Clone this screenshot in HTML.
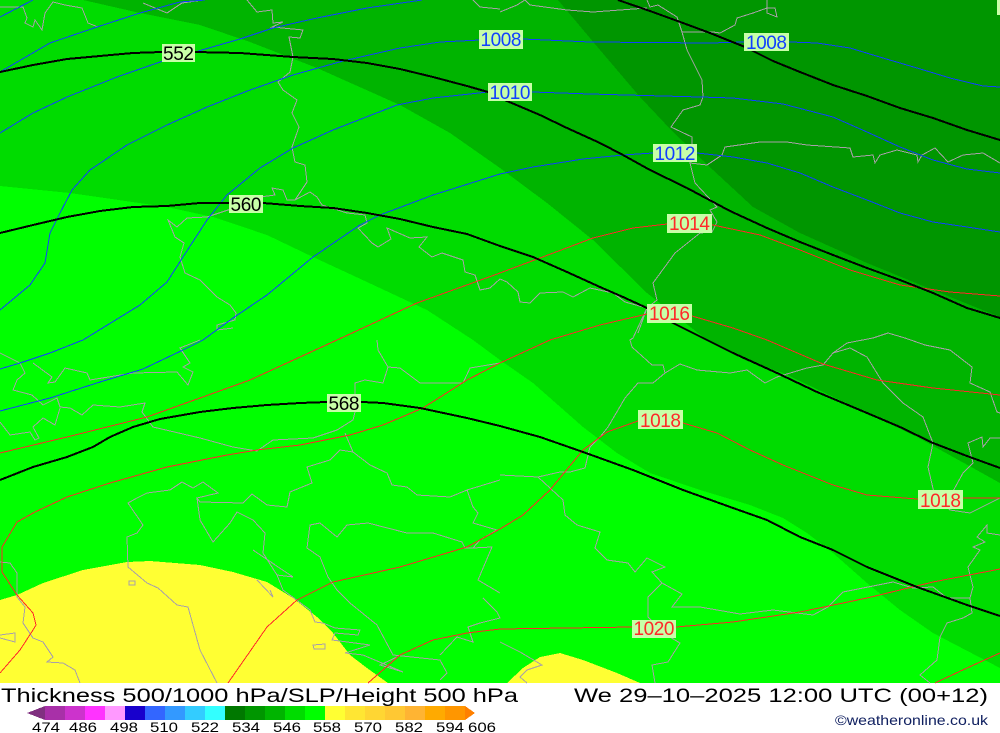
<!DOCTYPE html>
<html><head><meta charset="utf-8"><title>Thickness 500/1000 hPa</title>
<style>
html,body{margin:0;padding:0;background:#fff;width:1000px;height:733px;overflow:hidden}
svg{display:block;position:absolute;left:0;top:0}
.g{fill:none;stroke:#a8a0a8;stroke-width:1}
.b{fill:none;stroke:#1040ff;stroke-width:1}
.r{fill:none;stroke:#ff2828;stroke-width:1}
.k{fill:none;stroke:#000;stroke-width:2}
text{font-family:"Liberation Sans",sans-serif}
.l{font-size:19px;text-anchor:middle}
.t{font-size:19px;fill:#000}
.n{font-size:14px;fill:#000}
</style></head><body>
<svg width="1000" height="733" viewBox="0 0 1000 733" xmlns="http://www.w3.org/2000/svg">
<rect width="1000" height="733" fill="#fff"/>
<g shape-rendering="crispEdges">
<rect width="1000" height="683" fill="#00ff00"/>
<polygon fill="#00dc00" points="0,0 0,186 70,193 167,207 213,217 267,235 313,257 367,282 427,310 473,340 500,360 533,383 583,427 617,453 650,473 700,490 750,505 783,518 807,533 833,553 867,583 900,610 933,633 1000,668 1000,0"/>
<polygon fill="#00b400" points="83,0 140,13 200,25 250,42 317,68 400,105 450,133 500,168 547,203 593,240 647,293 707,340 745,360 783,373 867,413 917,437 1000,483 1000,0"/>
<polygon fill="#009600" points="558,0 600,50 640,97 673,132 713,170 753,207 800,233 867,263 933,290 1000,317 1000,0"/>
<polygon fill="#ffff33" points="0,600 17,595 43,583 83,570 127,562 150,561 200,565 233,572 267,582 293,598 317,617 333,633 350,655 367,668 388,683 0,683"/>
<polygon fill="#ffff33" points="507,683 523,668 540,657 560,653 583,660 617,673 640,683"/>
<rect x="997" y="0" width="3" height="15" fill="#c8ffa8"/>
</g>
<g shape-rendering="crispEdges">
<path class="g" d="M247,0 257,12 272,10 273,23 283,22 272,27 303,30 300,38 289,37 293,57 290,72 278,82 283,90 297,100 292,113 299,127 292,147 295,162 305,165 307,182 295,200 287,200 283,190 272,188 275,195 260,197 237,207 207,217 187,218 177,227 168,220 175,237 184,243 180,257 185,273 200,280 217,297 230,305 236,313 235,320 217,325 217,330 233,328"/>
<path class="g" d="M295,200 310,192 317,197 322,205 347,213 365,215 367,223 358,228 372,243 378,247 391,239 387,228 410,238 427,237 419,247 432,257 442,253 463,260 465,272 475,275 480,290 490,288 500,279 507,282 518,292 520,302 530,303 540,293 563,292 573,297 590,288 613,293 625,302 647,308 633,338 630,340 632,347 652,365 663,365 665,373 653,383 638,383 625,398 618,410 608,427 600,437 590,447 585,468 570,472 560,472 538,477 500,475"/>
<path class="g" d="M665,373 680,364 697,370 730,373 747,370 765,383 777,377 807,368 823,365 833,353 850,348 867,357 883,383 903,403 923,417 933,443 928,467 935,497 950,510 970,513 1000,498"/>
<path class="g" d="M833,353 847,343 873,338 888,333 905,338 925,345 950,350 972,367 970,383 990,392 997,412 1000,413"/>
<path class="g" d="M1000,438 990,438 983,447 982,437 968,443 973,463 963,473 952,493"/>
<path class="g" d="M647,0 650,7 658,5 677,17 682,32 687,50 702,80 703,97 700,105 683,110 671,127 692,137 692,150 690,163 695,183 708,197 717,207 710,210 717,222 712,232 700,233 675,253 653,283 657,300 647,308 638,333"/>
<path class="g" d="M682,32 713,32 720,33 735,25 737,18 753,13 767,8 775,8 777,17 767,13 767,0"/>
<path class="g" d="M500,12 517,5 525,0 530,5 567,10 593,12 647,8"/>
<path class="g" d="M690,163 707,165 722,155 725,147 760,142 787,142 807,145 850,148 853,157 873,155 875,163 880,155 897,150 917,155 918,162 922,155 935,148 948,162 963,155 983,153 1000,163"/>
<path class="g" d="M0,7 23,7 27,18 25,23 33,27 35,20 42,30 45,13 53,2 65,5 82,8 88,23 98,27"/>
<path class="g" d="M143,3 167,13 182,3 203,0"/>
<path class="g" d="M473,0 480,7 500,9"/>
<path class="g" d="M0,353 20,363 25,373 17,380 13,390 32,395 43,405 57,398 60,407 70,408 82,415 93,405 120,407 145,403 142,412 153,427 200,438 233,447 257,451 273,440 313,438 337,430 353,420 355,412 355,383 365,380 383,383 388,367 378,350 377,340"/>
<path class="g" d="M388,367 400,368 420,383 463,383 470,368 500,363"/>
<path class="g" d="M33,363 52,377 48,383 55,382 65,368 87,373 90,380 133,373 177,372 188,385 193,372 183,367 190,363 180,348 200,340"/>
<path class="g" d="M0,422 10,435 30,432 35,440 39,438 33,427 43,418 55,425 60,408"/>
<path class="g" d="M345,433 353,452 340,450 330,460 307,467 312,483 290,492 287,507 267,505 252,494 243,503 200,502 197,498 200,520 213,542 230,523 237,512 253,520 265,533 263,553 277,575 293,577"/>
<path class="g" d="M197,498 218,493 203,482 193,488 182,482 170,490 147,493 137,498 128,503 143,525 137,533 127,537 128,567 147,583 158,588 177,605 188,607 200,650 217,683"/>
<path class="g" d="M353,452 370,465 387,473 392,485 407,487 417,495 450,497 467,490 500,480"/>
<path class="g" d="M467,490 473,507 478,513 473,523 497,530 480,540 473,548 492,547 478,580 500,593"/>
<path class="g" d="M308,540 310,525 320,523 337,537 347,525 368,523 407,533 433,533 462,542 465,548 473,548"/>
<path class="g" d="M308,540 307,548 320,557 328,577 337,590 350,603 377,625 393,655 440,660 447,673 440,680"/>
<path class="g" d="M253,550 293,577 277,575 283,590 310,610 315,622 323,623 335,628 360,630 358,635 335,633 332,640 370,645 345,653 363,655 403,672 380,665 397,657"/>
<path class="g" d="M257,580 273,597 270,590"/>
<path class="g" d="M313,645 325,644 325,649 314,649Z M129,581 135,581 135,585 129,585Z"/>
<path class="g" d="M0,562 10,563 17,573 17,597 25,607 23,623 33,638 43,642 53,657 47,662 63,663 75,670 80,683"/>
<path class="g" d="M0,635 15,633 15,642 0,638"/>
<path class="g" d="M483,598 497,612 500,618 480,623 468,627 473,642 457,637 440,655"/>
<path class="g" d="M500,642 520,652 542,665 527,670 520,677 527,683"/>
<path class="g" d="M538,477 563,500 565,515 577,525 600,532 595,548 607,560 628,563 635,572 647,558 665,567 652,572 662,583 648,597 648,617 663,633 680,643 668,662 652,665 655,683"/>
<path class="g" d="M662,583 682,594 672,607 700,607 740,614 773,610 813,615 828,607 843,592 893,582 913,588 933,587 947,598 970,598 973,587 968,567 980,550 973,547 985,542 977,537 987,525 987,533 1000,535"/>
<path class="g" d="M970,598 972,613 963,618 947,623 940,637 937,660 920,675 930,683"/>

<path class="b" d="M0,17 33,0"/>
<path class="b" d="M0,72 50,43 97,27 140,13 180,2 205,0"/>
<path class="b" d="M0,133 33,113 67,97 117,77 160,62 195,52 240,39 273,28 317,18 367,8 422,0"/>
<path class="b" d="M0,310 30,285 45,263 50,233 60,213 72,190 90,170 127,145 167,125 207,107 250,90 293,75 343,61 400,48 440,42 480,40 523,39 590,42 710,43 745,42 790,42 817,43 850,48 883,58 917,68 950,78 983,86 1000,87"/>
<path class="b" d="M0,369 20,363 50,353 83,340 140,305 167,282 183,257 207,220 227,195 260,168 293,148 333,130 397,105 433,98 488,92 532,92 590,94 700,97 733,98 783,104 833,117 867,132 900,147 933,160 967,169 1000,173"/>
<path class="b" d="M0,411 50,398 100,382 143,369 183,350 203,340 233,318 267,295 313,257 360,225 380,215 433,195 500,174 533,167 583,159 623,155 653,153 697,153 733,157 767,163 800,173 833,187 867,200 900,213 933,222 967,227 1000,232"/>

<path class="r" d="M0,453 67,437 147,417 200,398 250,380 300,357 337,340 417,303 500,273 540,258 593,238 633,228 667,224 713,225 760,235 800,250 850,270 900,285 950,292 1000,296"/>
<path class="r" d="M0,673 20,650 33,630 36,625 33,613 17,595 2,572 2,547 17,522 35,512 67,497 110,483 167,467 227,455 257,450 300,445 350,435 383,425 423,408 467,380 500,363 550,340 600,325 647,314 692,316 733,328 767,340 823,364 877,380 933,388 1000,395"/>
<path class="r" d="M228,683 267,627 297,600 333,582 400,567 467,547 500,529 523,515 550,490 583,450 607,432 638,421 683,423 717,433 750,450 783,465 833,485 867,495 917,499 963,498 1000,498"/>
<path class="r" d="M368,683 400,655 433,640 467,633 500,629 633,627 676,627 733,622 800,612 867,598 933,582 1000,569"/>
<path class="r" d="M935,683 967,668 1000,653"/>

<path class="k" d="M0,72 33,65 67,59 100,56 133,53 162,52 195,52 240,53 293,57 333,59 367,63 400,69 433,77 467,86 488,92 507,101 540,115 567,128 600,143 623,155 650,170 687,188 730,211 767,228 800,242 833,255 867,268 900,280 933,293 967,308 1000,318"/>
<path class="k" d="M618,0 650,11 683,23 710,33 745,47 753,51 773,61 800,72 833,85 867,96 900,108 933,118 967,130 1000,140"/>
<path class="k" d="M0,233 33,225 67,217 100,211 133,207 167,206 200,203 230,203 263,203 300,206 333,208 367,213 400,219 433,227 467,234 500,246 533,257 567,272 600,287 623,297 647,308 673,323 707,340 733,353 777,373 817,392 867,413 900,427 933,443 967,456 1000,468"/>
<path class="k" d="M0,480 33,467 67,457 93,447 110,437 133,427 160,419 200,412 233,408 267,405 300,403 327,402 362,402 383,403 420,408 467,418 500,426 540,437 583,452 633,470 683,490 733,508 767,520 800,537 833,550 867,567 917,587 967,605 1000,616"/>

<g fill="#c8ffa8">
<rect x="162" y="44" width="33" height="18"/>
<rect x="229" y="195" width="34" height="18"/>
<rect x="327" y="394" width="34" height="18"/>
<rect x="479" y="30" width="44" height="19"/>
<rect x="744" y="33" width="45" height="18"/>
<rect x="488" y="83" width="44" height="18"/>
<rect x="653" y="144" width="44" height="18"/>
<rect x="667" y="214" width="45" height="19"/>
<rect x="647" y="304" width="45" height="19"/>
<rect x="638" y="410" width="45" height="19"/>
<rect x="918" y="490" width="45" height="19"/>
<rect x="632" y="620" width="44" height="18"/>
</g>
</g>
<g>
<text class="l" x="178.500" y="60" textLength="31" fill="#000">552</text>
<text class="l" x="246" y="211" textLength="31" fill="#000">560</text>
<text class="l" x="344" y="410" textLength="31" fill="#000">568</text>
<text class="l" x="501" y="46" textLength="41" fill="#1040ff">1008</text>
<text class="l" x="766.500" y="49" textLength="41" fill="#1040ff">1008</text>
<text class="l" x="510" y="99" textLength="41" fill="#1040ff">1010</text>
<text class="l" x="675" y="160" textLength="41" fill="#1040ff">1012</text>
<text class="l" x="689.500" y="230" textLength="41" fill="#ff2828">1014</text>
<text class="l" x="669.500" y="320" textLength="41" fill="#ff2828">1016</text>
<text class="l" x="660.500" y="427" textLength="41" fill="#ff2828">1018</text>
<text class="l" x="940.500" y="507" textLength="41" fill="#ff2828">1018</text>
<text class="l" x="654" y="635" textLength="41" fill="#ff2828">1020</text>
</g>
<g shape-rendering="crispEdges">
<polygon points="27,713 45,706 45,720" fill="#803080"/>
<rect x="45" y="706" width="20" height="14" fill="#a830a8"/>
<rect x="65" y="706" width="20" height="14" fill="#cc33cc"/>
<rect x="85" y="706" width="20" height="14" fill="#ff33ff"/>
<rect x="105" y="706" width="20" height="14" fill="#ff99ff"/>
<rect x="125" y="706" width="20" height="14" fill="#1800cc"/>
<rect x="145" y="706" width="20" height="14" fill="#3366ff"/>
<rect x="165" y="706" width="20" height="14" fill="#3399ff"/>
<rect x="185" y="706" width="20" height="14" fill="#33ccff"/>
<rect x="205" y="706" width="20" height="14" fill="#33ffff"/>
<rect x="225" y="706" width="20" height="14" fill="#007800"/>
<rect x="245" y="706" width="20" height="14" fill="#009600"/>
<rect x="265" y="706" width="20" height="14" fill="#00b400"/>
<rect x="285" y="706" width="20" height="14" fill="#00dc00"/>
<rect x="305" y="706" width="20" height="14" fill="#00ff00"/>
<rect x="325" y="706" width="20" height="14" fill="#ffff33"/>
<rect x="345" y="706" width="20" height="14" fill="#ffe633"/>
<rect x="365" y="706" width="20" height="14" fill="#ffd633"/>
<rect x="385" y="706" width="20" height="14" fill="#ffc833"/>
<rect x="405" y="706" width="20" height="14" fill="#ffb433"/>
<rect x="425" y="706" width="20" height="14" fill="#ffaa00"/>
<rect x="445" y="706" width="20" height="14" fill="#ff9600"/>
<polygon points="465,706 475,713 465,720" fill="#ff8000"/>
</g>
<text class="t" x="1" y="702" textLength="517" lengthAdjust="spacingAndGlyphs">Thickness 500/1000 hPa/SLP/Height 500 hPa</text>
<text class="t" x="574" y="702" textLength="414" lengthAdjust="spacingAndGlyphs">We 29–10–2025 12:00 UTC (00+12)</text>
<g>
<text class="n" x="32" y="732" textLength="28" lengthAdjust="spacingAndGlyphs">474</text>
<text class="n" x="69" y="732" textLength="28" lengthAdjust="spacingAndGlyphs">486</text>
<text class="n" x="110" y="732" textLength="28" lengthAdjust="spacingAndGlyphs">498</text>
<text class="n" x="150" y="732" textLength="28" lengthAdjust="spacingAndGlyphs">510</text>
<text class="n" x="191" y="732" textLength="28" lengthAdjust="spacingAndGlyphs">522</text>
<text class="n" x="232" y="732" textLength="28" lengthAdjust="spacingAndGlyphs">534</text>
<text class="n" x="273" y="732" textLength="28" lengthAdjust="spacingAndGlyphs">546</text>
<text class="n" x="313" y="732" textLength="28" lengthAdjust="spacingAndGlyphs">558</text>
<text class="n" x="354" y="732" textLength="28" lengthAdjust="spacingAndGlyphs">570</text>
<text class="n" x="395" y="732" textLength="28" lengthAdjust="spacingAndGlyphs">582</text>
<text class="n" x="436" y="732" textLength="28" lengthAdjust="spacingAndGlyphs">594</text>
<text class="n" x="468" y="732" textLength="28" lengthAdjust="spacingAndGlyphs">606</text>
</g>
<text x="835" y="725" font-size="14" fill="#102060" textLength="153" lengthAdjust="spacingAndGlyphs">©weatheronline.co.uk</text>
</svg>
</body></html>
